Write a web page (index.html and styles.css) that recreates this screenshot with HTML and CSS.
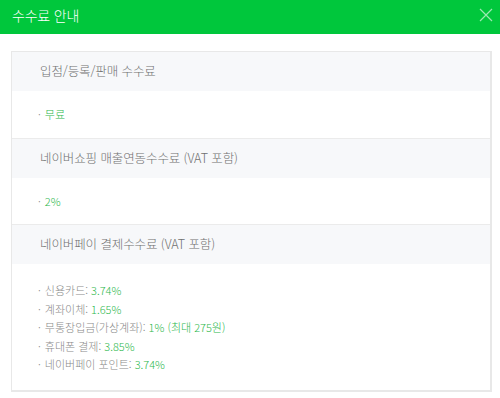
FILE: index.html
```html
<!DOCTYPE html>
<html lang="ko">
<head>
    <meta charset="UTF-8">
    <meta name="viewport" content="width=device-width, initial-scale=1.0">
    <title>수수료 안내</title>
    <link rel="stylesheet" href="styles.css">
</head>
<body>
    <div class="header">
        <h1>수수료 안내</h1>
        <button class="close" type="button">
            <svg width="14" height="14" viewBox="0 0 14 14">
                <path d="M1 1L13 13M13 1L1 13" stroke="#9be8b2" stroke-width="1.2" fill="none"/>
            </svg>
        </button>
    </div>

    <div class="content">
        <div class="fee-box">
            <div class="fee-title">입점/등록/판매 수수료</div>
            <ul class="fee-list">
                <li><span class="val">무료</span></li>
            </ul>

            <div class="fee-title">네이버쇼핑 매출연동수수료 (VAT 포함)</div>
            <ul class="fee-list">
                <li><span class="val">2%</span></li>
            </ul>

            <div class="fee-title">네이버페이 결제수수료 (VAT 포함)</div>
            <ul class="fee-list multi">
                <li>신용카드: <span class="val">3.74%</span></li>
                <li>계좌이체: <span class="val">1.65%</span></li>
                <li>무통장입금(가상계좌): <span class="val">1% (최대 275원)</span></li>
                <li>휴대폰 결제: <span class="val">3.85%</span></li>
                <li>네이버페이 포인트: <span class="val">3.74%</span></li>
            </ul>
        </div>
    </div>
</body>
</html>
```

FILE: styles.css
```css
body {
    margin: 0;
    font-family: "Noto Sans CJK KR", "Noto Sans", sans-serif;
    font-weight: 300;
    background: #fff;
}

.header {
    height: 34px;
    background-color: #00c73c;
    display: flex;
    align-items: center;
    justify-content: space-between;
    padding: 0 7px 0 12px;
}

.header h1 {
    margin: 0 0 4px;
    font-size: 14px;
    font-weight: 300;
    color: #fff;
    letter-spacing: -0.2px;
}

.close {
    border: 0;
    background: none;
    padding: 0;
    margin-bottom: 5px;
    width: 14px;
    height: 14px;
    display: flex;
}

.content {
    padding: 17px 8px 9px 11px;
}

.fee-box {
    border: 1px solid #e8e8e8;
    border-right-width: 2px;
    border-bottom-width: 2px;
}

.fee-title {
    height: 39px;
    line-height: 37px;
    padding-left: 28px;
    background-color: #f7f8fa;
    font-size: 12.5px;
    color: #707070;
    letter-spacing: -0.1px;
}

.fee-list {
    list-style: none;
    margin: 0;
    padding: 14px 0 14px 26px;
    font-size: 11px;
    color: #8a8a8a;
    line-height: 18.5px;
    border-bottom: 1px solid #ebebeb;
}

.fee-list:last-child {
    border-bottom: 0;
}

.fee-list.multi {
    padding-top: 17px;
    padding-bottom: 16px;
}

.fee-list li::before {
    content: "·";
    margin-right: 4px;
}

.val {
    color: #2db84d;
}
```
